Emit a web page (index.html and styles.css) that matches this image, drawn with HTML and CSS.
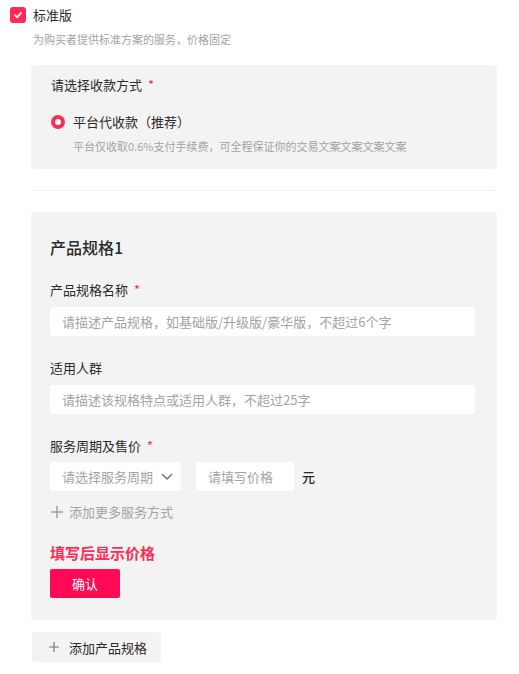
FILE: index.html
```
<!DOCTYPE html>
<html lang="zh">
<head>
<meta charset="utf-8">
<link rel="stylesheet" href="styles.css">
</head>
<body>
<div class="page">
  <div class="check-row">
    <span class="checkbox">
      <svg width="10" height="10" viewBox="0 0 10 10"><path d="M2 5.2 L4.2 7.3 L8 3" fill="none" stroke="#fff" stroke-width="1.8" stroke-linecap="round" stroke-linejoin="round"/></svg>
    </span>
    <span class="check-label">标准版</span>
  </div>
  <div class="check-sub">为购买者提供标准方案的服务，价格固定</div>

  <div class="panel pay">
    <div class="label">请选择收款方式 <span class="req">*</span></div>
    <div class="radio-row">
      <span class="radio"></span>
      <span class="radio-label">平台代收款（推荐）</span>
    </div>
    <div class="radio-desc">平台仅收取0.6%支付手续费，可全程保证你的交易文案文案文案文案</div>
  </div>

  <div class="divider"></div>

  <div class="panel spec">
    <div class="spec-title">产品规格1</div>

    <div class="label f1">产品规格名称 <span class="req">*</span></div>
    <div class="field">请描述产品规格，如基础版/升级版/豪华版，不超过6个字</div>

    <div class="label f2">适用人群</div>
    <div class="field">请描述该规格特点或适用人群，不超过25字</div>

    <div class="label f2">服务周期及售价 <span class="req">*</span></div>
    <div class="price-row">
      <div class="field select">
        <span>请选择服务周期</span>
        <svg width="12" height="8" viewBox="0 0 12 8"><path d="M1.5 1.5 L6 6 L10.5 1.5" fill="none" stroke="#777" stroke-width="1.6" stroke-linecap="round" stroke-linejoin="round"/></svg>
      </div>
      <div class="field price">请填写价格</div>
      <span class="unit">元</span>
    </div>
    <div class="add-more">
      <svg width="12" height="12" viewBox="0 0 12 12"><path d="M6 0 V12 M0 6 H12" stroke="#a3a3a3" stroke-width="1.6"/></svg>
      <span>添加更多服务方式</span>
    </div>

    <div class="price-hint">填写后显示价格</div>
    <div class="btn-confirm">确认</div>
  </div>

  <div class="add-spec">
    <svg width="10" height="10" viewBox="0 0 10 10"><path d="M5 0 V10 M0 5 H10" stroke="#777" stroke-width="1.2"/></svg>
    <span>添加产品规格</span>
  </div>
</div>
</body>
</html>
```
FILE: styles.css
```
* { box-sizing: border-box; }
html, body { margin: 0; padding: 0; background: #fff; }
body {
  font-family: "Noto Sans CJK SC", "Noto Sans", sans-serif;
  color: #333;
  width: 519px;
}
.page { padding: 7px 22px 0 10px; }

.check-row { display: flex; align-items: center; height: 16px; }
.checkbox {
  width: 16px; height: 16px; border-radius: 3px; background: #fe2c55;
  display: flex; align-items: center; justify-content: center; flex: none;
}
.check-label { margin-left: 7px; font-size: 13px; line-height: 16px; color: #2a2a2a; }
.check-sub { margin: 8px 0 0 23px; font-size: 11px; line-height: 16px; color: #a3a3a3; }

.panel { background: #f3f3f3; border-radius: 4px; margin-left: 21px; }
.pay { margin-top: 18px; height: 104px; padding: 11px 20px 0 20px; }
.label { font-size: 13px; line-height: 18px; color: #2a2a2a; }
.req { color: #fe2c55; margin-left: 3px; }
.radio-row { display: flex; align-items: center; margin-top: 18px; height: 20px; }
.radio {
  width: 14px; height: 14px; border-radius: 50%;
  border: 4px solid #fe2c55; background: #fff; flex: none;
}
.radio-label { margin-left: 8px; font-size: 13px; line-height: 20px; color: #2a2a2a; }
.radio-desc { margin: 6px 0 0 22px; font-size: 11px; line-height: 16px; color: #a3a3a3; }

.divider { height: 1px; background: #efefef; margin: 21px 2px 21px 21px; }

.spec { padding: 24px 22px 22px 19px; }
.spec-title { font-size: 16px; line-height: 22px; font-weight: 500; color: #2a2a2a; }
.f1 { margin-top: 23px; }
.f2 { margin-top: 23px; }
.field {
  margin-top: 8px; height: 29px; background: #fff; border-radius: 3px;
  padding: 0 12px; font-size: 13px; line-height: 29px; color: #a3a3a3;
}
.price-row { display: flex; align-items: center; margin-top: 7px; }
.price-row .field { margin-top: 0; }
.select { width: 131px; display: flex; align-items: center; justify-content: space-between; padding-right: 8px; }
.price { width: 98px; margin-left: 15px; }
.unit { margin-left: 8px; font-size: 13px; color: #2a2a2a; font-weight: 500; }
.add-more { display: flex; align-items: center; margin-top: 12px; height: 18px; }
.add-more svg { margin-left: 1px; }
.add-more span { margin-left: 6px; font-size: 13px; line-height: 18px; color: #a3a3a3; }
.price-hint { margin-top: 22px; font-size: 15px; line-height: 20px; color: #fe2c55; font-weight: 600; }
.btn-confirm {
  margin-top: 6px; width: 70px; height: 29px; border-radius: 2px; background: #fe0a55;
  color: #fff; font-size: 13px; line-height: 29px; text-align: center;
}

.add-spec {
  margin: 12px 0 0 22px; width: 129px; height: 30px; border-radius: 3px; background: #f3f3f3;
  display: flex; align-items: center; padding-left: 17px;
}
.add-spec span { margin-left: 10px; font-size: 13px; color: #2a2a2a; }
```
